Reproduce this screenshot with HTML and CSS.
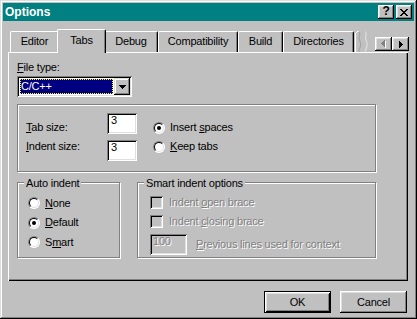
FILE: index.html
```html
<!DOCTYPE html>
<html lang="en">
<head>
    <meta http-equiv="Content-Type" content="text/html; charset=utf-8" />
    <title>Options</title>
    <link rel="stylesheet" href="styles.css">
</head>
<body>
<div class="window">
    <div class="titlebar">
        <span class="title">Options</span>
        <button class="caption-btn help-btn">?</button>
        <button class="caption-btn close-btn">
            <svg width="8" height="7" viewBox="0 0 8 7" shape-rendering="crispEdges"><path d="M0 0h2v1H0zM6 0h2v1H6zM1 1h2v1H1zM5 1h2v1H5zM2 2h4v1H2zM3 3h2v1H3zM2 4h4v1H2zM1 5h2v1H1zM5 5h2v1H5zM0 6h2v1H0zM6 6h2v1H6z"/></svg>
        </button>
    </div>

    <div class="tabstrip">
        <div class="tab tab-editor">Editor</div>
        <div class="tab tab-tabs selected">Tabs</div>
        <div class="tab tab-debug">Debug</div>
        <div class="tab tab-compat">Compatibility</div>
        <div class="tab tab-build">Build</div>
        <div class="tab tab-dirs">Directories</div>
        <div class="tab-partial">
            <svg width="16" height="21" viewBox="0 0 16 21">
                <rect x="1" y="2" width="1" height="19" fill="#fff"/>
                <rect x="2" y="1" width="1" height="1" fill="#fff"/>
                <rect x="3" y="0" width="2" height="1" fill="#fff"/>
                <path d="M5 0.5C7 3 4 6 5.5 9S7 15 5.5 18S5 20 5.5 21" stroke="#a0a0a0" fill="none"/>
                <path d="M11.5 0.5C13.5 3 10.5 6 12 9S13.5 15 12 18S11.5 20 12 21" stroke="#e8e8e8" fill="none"/>
            </svg>
        </div>
        <div class="tab-scroll">
            <button class="scroll-btn">
                <svg width="5" height="8" viewBox="0 0 5 8" shape-rendering="crispEdges">
                    <path fill="#fff" d="M4 1h1v7H4zM3 2h1v5H3zM2 3h1v3H2zM1 4h1v1H1z"/>
                    <path fill="#808080" d="M3 0h1v7H3zM2 1h1v5H2zM1 2h1v3H1zM0 3h1v1H0z"/>
                </svg>
            </button>
            <button class="scroll-btn">
                <svg width="4" height="7" viewBox="0 0 4 7" shape-rendering="crispEdges"><path d="M0 0h1v7H0zM1 1h1v5H1zM2 2h1v3H2zM3 3h1v1H3z"/></svg>
            </button>
        </div>
    </div>

    <div class="panel">
        <div class="field-label"><u>F</u>ile type:</div>
        <div class="combo">
            <div class="combo-value">C/C++</div>
            <div class="combo-btn">
                <svg width="7" height="4" viewBox="0 0 7 4" shape-rendering="crispEdges"><path d="M0 0h7v1H0zM1 1h5v1H1zM2 2h3v1H2zM3 3h1v1H3z"/></svg>
            </div>
        </div>

        <div class="group group-sizes">
            <div class="size-row row-first">
                <span class="size-label"><u>T</u>ab size:</span>
                <span class="textbox">3</span>
                <span class="option size-option"><span class="radio checked"></span><span>Insert <u>s</u>paces</span></span>
            </div>
            <div class="size-row row-second">
                <span class="size-label"><u>I</u>ndent size:</span>
                <span class="textbox">3</span>
                <span class="option size-option"><span class="radio"></span><span><u>K</u>eep tabs</span></span>
            </div>
        </div>

        <div class="group-row">
            <div class="group group-auto">
                <div class="group-title">Auto indent</div>
                <div class="option"><span class="radio"></span><span><u>N</u>one</span></div>
                <div class="option"><span class="radio checked"></span><span><u>D</u>efault</span></div>
                <div class="option"><span class="radio"></span><span>S<u>m</u>art</span></div>
            </div>
            <div class="group group-smart">
                <div class="group-title">Smart indent options</div>
                <div class="option check-option disabled"><span class="checkbox"></span><span>Indent <u>o</u>pen brace</span></div>
                <div class="option check-option disabled"><span class="checkbox"></span><span>Indent <u>c</u>losing brace</span></div>
                <div class="option context-option disabled"><span class="textbox textbox-disabled">100</span><span><u>P</u>revious lines used for context</span></div>
            </div>
        </div>
    </div>

    <div class="dialog-buttons">
        <button class="btn btn-default">OK</button>
        <button class="btn">Cancel</button>
    </div>
</div>
</body>
</html>
```

FILE: styles.css
```css
* {
    box-sizing: border-box;
}

body {
    margin: 0;
    background-color: #c0c0c0;
    font-family: "Liberation Sans", Arial, sans-serif;
    font-size: 11px;
    line-height: 13px;
    letter-spacing: -0.2px;
    color: #000;
}

button {
    font: inherit;
    letter-spacing: inherit;
    color: inherit;
    padding: 0;
    border: none;
    background-color: #c0c0c0;
}

u {
    text-decoration: underline;
    text-underline-offset: 1px;
}

/* window frame */
.window {
    width: 417px;
    height: 319px;
    padding: 3px;
    background-color: #c0c0c0;
    display: flex;
    flex-direction: column;
    box-shadow: inset -1px -1px #000, inset 1px 1px #dfdfdf, inset -2px -2px #808080, inset 2px 2px #fff;
}

.titlebar {
    height: 18px;
    background-color: #008080;
    display: flex;
    align-items: center;
    padding: 0 2px;
}

.title {
    flex: 1;
    color: #fff;
    font-weight: bold;
    font-size: 12px;
    letter-spacing: 0;
}

.caption-btn {
    width: 16px;
    height: 14px;
    display: flex;
    align-items: center;
    justify-content: center;
    box-shadow: inset -1px -1px #000, inset 1px 1px #fff, inset -2px -2px #808080, inset 2px 2px #dfdfdf;
}

.help-btn {
    font-weight: bold;
    font-size: 12px;
    padding-bottom: 1px;
}

.close-btn {
    margin-left: 2px;
}

/* tabs */
.tabstrip {
    height: 23px;
    margin: 8px 6px 0 5px;
    padding-left: 2px;
    display: flex;
    align-items: flex-end;
}

.tab {
    height: 21px;
    padding-top: 3px;
    text-align: center;
    background-color: #c0c0c0;
    border-top: 1px solid #fff;
    border-left: 1px solid #fff;
    border-right: 1px solid #000;
    border-radius: 2px 2px 0 0;
    box-shadow: inset -1px 0 #808080;
}

.tab.selected {
    height: 24px;
    margin: 0 -2px -1px;
    padding-top: 4px;
    position: relative;
    z-index: 1;
}

.tab-editor { width: 49px; }
.tab-tabs { width: 49px; }
.tab-debug { width: 54px; }
.tab-compat { width: 80px; }
.tab-build { width: 45px; }
.tab-dirs { width: 71px; }

.tab-partial {
    width: 16px;
    height: 21px;
}

.tab-partial svg {
    display: block;
}

.tab-scroll {
    display: flex;
    align-self: flex-start;
    margin-left: auto;
    margin-top: 8px;
    margin-right: -1px;
}

.scroll-btn {
    width: 17px;
    height: 14px;
    display: flex;
    align-items: center;
    justify-content: center;
    box-shadow: inset -1px -1px #000, inset 1px 1px #fff, inset -2px -2px #808080, inset 2px 2px #dfdfdf;
}

/* tab body */
.panel {
    height: 229px;
    margin: 0 6px 0 5px;
    padding: 9px 9px 0;
    box-shadow: inset 1px 1px #fff, inset -1px -1px #000, inset -2px -2px #808080;
}

.field-label {
    height: 13px;
}

.combo {
    width: 115px;
    height: 21px;
    margin-top: 2px;
    padding: 2px;
    display: flex;
    background-color: #fff;
    box-shadow: inset 1px 1px #808080, inset -1px -1px #fff, inset 2px 2px #000, inset -2px -2px #dfdfdf;
}

.combo-value {
    flex: 1;
    margin: 1px;
    background-color: #000080;
    color: #fff;
    border: 1px dotted #ffff00;
    line-height: 13px;
}

.combo-btn {
    width: 16px;
    height: 17px;
    display: flex;
    align-items: center;
    justify-content: center;
    background-color: #c0c0c0;
    box-shadow: inset -1px -1px #000, inset 1px 1px #dfdfdf, inset -2px -2px #808080, inset 2px 2px #fff;
}

/* group boxes (etched) */
.group {
    border: 1px solid #808080;
    box-shadow: inset 1px 1px #fff, 1px 1px #fff;
}

.group-title {
    width: fit-content;
    margin: -6px 0 0 6px;
    padding: 0 2px;
    background-color: #c0c0c0;
}

.group-sizes {
    width: 359px;
    height: 68px;
    margin-top: 7px;
    padding: 8px 0 0 8px;
}

.size-row {
    display: flex;
    height: 21px;
}

.row-first {
    align-items: flex-end;
}

.row-second {
    align-items: flex-start;
    margin-top: 6px;
}

.size-label {
    width: 81px;
}

.textbox {
    width: 30px;
    height: 21px;
    padding: 1px 4px 0;
    background-color: #fff;
    box-shadow: inset 1px 1px #808080, inset -1px -1px #fff, inset 2px 2px #000, inset -2px -2px #dfdfdf;
}

.size-option {
    margin-left: 16px;
}

.option {
    display: flex;
    align-items: center;
    gap: 5px;
}

.radio {
    width: 12px;
    height: 12px;
    flex: none;
    position: relative;
    border-radius: 50%;
    background-color: #fff;
    border: 1px solid;
    border-color: #808080 #fff #fff #808080;
}

.radio::before {
    content: "";
    position: absolute;
    inset: 0;
    border-radius: 50%;
    border: 1px solid;
    border-color: #000 #dfdfdf #dfdfdf #000;
}

.radio.checked::after {
    content: "";
    position: absolute;
    left: 3px;
    top: 3px;
    width: 4px;
    height: 4px;
    border-radius: 50%;
    background-color: #000;
}

.checkbox {
    width: 13px;
    height: 13px;
    flex: none;
    background-color: #c0c0c0;
    box-shadow: inset 1px 1px #808080, inset -1px -1px #fff, inset 2px 2px #000, inset -2px -2px #dfdfdf;
}

.group-row {
    display: flex;
    gap: 17px;
    margin-top: 10px;
}

.group-auto {
    width: 103px;
    height: 76px;
    padding-left: 10px;
    display: flex;
    flex-direction: column;
    gap: 6.5px;
}

.group-auto .group-title {
    margin-left: -4px;
}

.group-smart {
    width: 239px;
    height: 76px;
    padding-left: 12px;
    display: flex;
    flex-direction: column;
    gap: 6px;
}

.group-smart .group-title {
    margin-left: -6px;
}

.check-option {
    gap: 6px;
}

.context-option {
    gap: 9px;
}

.textbox-disabled {
    width: 37px;
    padding-left: 3px;
    background-color: #c0c0c0;
}

.disabled {
    color: #808080;
    text-shadow: 1px 1px 0 #fff;
}

/* OK / Cancel */
.dialog-buttons {
    display: flex;
    justify-content: flex-end;
    gap: 9px;
    margin: 10px 7px 0 0;
}

.btn {
    width: 67px;
    height: 22px;
    box-shadow: inset -1px -1px #000, inset 1px 1px #fff, inset -2px -2px #808080, inset 2px 2px #dfdfdf;
}

.btn-default {
    box-shadow: inset 0 0 0 1px #000, inset 2px 2px #fff, inset -2px -2px #000, inset 3px 3px #dfdfdf, inset -3px -3px #808080;
}
```
